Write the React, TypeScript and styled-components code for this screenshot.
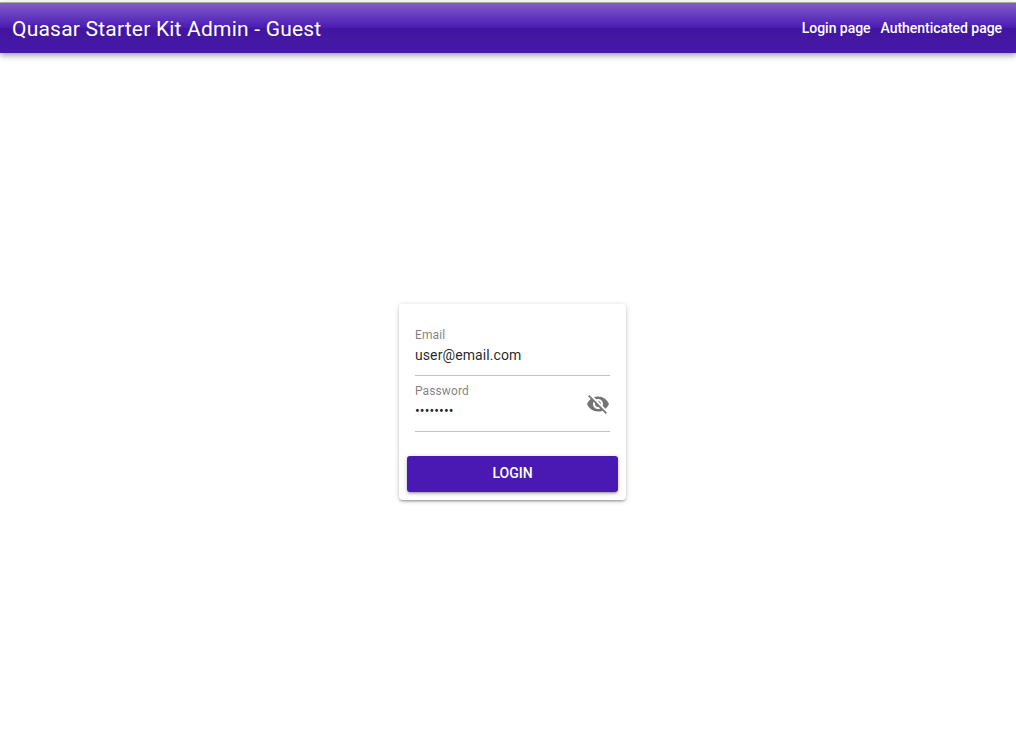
import React, { useState } from 'react';
import styled, { createGlobalStyle } from 'styled-components';
import { MdVisibility, MdVisibilityOff } from 'react-icons/md';

const PRIMARY = '#4a19b3';

const App = () => {
  const [email, setEmail] = useState('user@email.com');
  const [password, setPassword] = useState('password');
  const [hidden, setHidden] = useState(true);

  return (
    <Layout>
      <GlobalStyle />
      <Header>
        <Title>Quasar Starter Kit Admin - Guest</Title>
        <Nav>
          <NavLink>Login page</NavLink>
          <NavLink>Authenticated page</NavLink>
        </Nav>
      </Header>
      <Page>
        <Card onSubmit={(e) => e.preventDefault()}>
          <Fields>
            <Field>
              <Control>
                <Label>Email</Label>
                <Input value={email} onChange={(e) => setEmail(e.target.value)} />
              </Control>
            </Field>
            <Field>
              <Control>
                <Label>Password</Label>
                <Input
                  type={hidden ? 'password' : 'text'}
                  value={password}
                  onChange={(e) => setPassword(e.target.value)}
                />
              </Control>
              <Toggle type="button" onClick={() => setHidden(!hidden)}>
                {hidden ? <MdVisibilityOff size={24} /> : <MdVisibility size={24} />}
              </Toggle>
            </Field>
          </Fields>
          <Actions>
            <Submit>LOGIN</Submit>
          </Actions>
        </Card>
      </Page>
    </Layout>
  );
};

const GlobalStyle = createGlobalStyle`
  * {
    box-sizing: border-box;
  }

  body {
    margin: 0;
    background: #fff;
    font-family: Roboto, sans-serif;
    font-size: 14px;
    overflow: hidden;
  }
`;

const Layout = styled.div`
  display: flex;
  flex-direction: column;
  height: 738px;
  padding-top: 2px;
`;

const Header = styled.header`
  display: flex;
  align-items: center;
  justify-content: space-between;
  height: 51px;
  flex: none;
  padding: 0 14px 0 12px;
  border-top: 1px solid #aaa;
  color: #fff;
  background: linear-gradient(
      to bottom,
      rgba(255, 255, 255, 0.3),
      rgba(255, 255, 255, 0) 50%,
      rgba(0, 0, 0, 0.12) 51%,
      rgba(0, 0, 0, 0.04)
    )
    ${PRIMARY};
  box-shadow: 0 2px 4px -1px rgba(0, 0, 0, 0.2), 0 4px 5px rgba(0, 0, 0, 0.14),
    0 1px 10px rgba(0, 0, 0, 0.12);
`;

const Title = styled.div`
  padding-top: 2px;
  font-size: 21px;
  letter-spacing: 0.21px;
  line-height: 48px;
`;

const Nav = styled.nav`
  display: flex;
  gap: 10px;
`;

const NavLink = styled.a`
  font-weight: 500;
  line-height: 24px;
  letter-spacing: -0.04px;
  cursor: pointer;
`;

const Page = styled.main`
  display: flex;
  flex: 1;
  justify-content: center;
  align-items: flex-start;
  padding: 251px 0 0 9px;
`;

const Card = styled.form`
  width: 227px;
  border-radius: 4px;
  background: #fff;
  box-shadow: 0 1px 5px rgba(0, 0, 0, 0.2), 0 2px 2px rgba(0, 0, 0, 0.14),
    0 3px 1px -2px rgba(0, 0, 0, 0.12);
`;

const Fields = styled.div`
  padding: 16px;
`;

const Field = styled.div`
  display: flex;
  height: 56px;
  align-items: center;
  border-bottom: 1px solid rgba(0, 0, 0, 0.24);
`;

const Control = styled.label`
  display: flex;
  flex: 1;
  flex-direction: column;
  min-width: 0;
  height: 100%;
  padding-top: 8px;
`;

const Label = styled.span`
  font-size: 12px;
  line-height: 15px;
  letter-spacing: 0.11px;
  color: rgba(0, 0, 0, 0.52);
`;

const Input = styled.input`
  width: 100%;
  height: 24px;
  padding: 0;
  border: 0;
  outline: 0;
  background: none;
  font: 400 14px/24px Roboto, sans-serif;
  letter-spacing: 0.09px;
  color: rgba(0, 0, 0, 0.87);
`;

const Toggle = styled.button`
  display: flex;
  padding: 0;
  border: 0;
  background: none;
  color: rgba(0, 0, 0, 0.54);
  cursor: pointer;
`;

const Actions = styled.div`
  padding: 8px;
`;

const Submit = styled.button`
  display: block;
  width: 100%;
  height: 36px;
  padding: 0 0 2px;
  border: 0;
  border-radius: 3px;
  background: ${PRIMARY};
  color: #fff;
  font: 500 14px/24px Roboto, sans-serif;
  cursor: pointer;
  box-shadow: 0 1px 5px rgba(0, 0, 0, 0.2), 0 2px 2px rgba(0, 0, 0, 0.14),
    0 3px 1px -2px rgba(0, 0, 0, 0.12);
`;

export default App;
